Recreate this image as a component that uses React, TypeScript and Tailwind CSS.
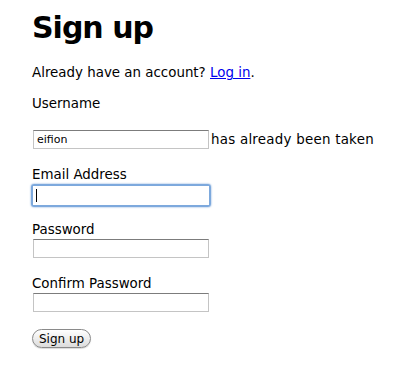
import { useState } from "react";

const font = { fontFamily: '"DejaVu Sans", Verdana, sans-serif' };

function TextInput({ value, focused, type = "text" }: { value?: string; focused?: boolean; type?: string }) {
  const base =
    "block shrink-0 w-[176px] h-[19px] bg-white px-[3px] text-[11px] text-black outline-none border border-[#c4c4c4] border-t-[#7c7c7c]";
  if (focused) {
    return (
      <div className="w-[180px] h-[23px] -ml-[2px] rounded-[3px] border-[2px] border-[#7da9dd] shadow-[0_0_2px_#6b9ad3]">
        <div className="h-full w-full bg-white flex items-center pl-[3px]">
          <span className="block w-px h-[13px] bg-black" />
        </div>
      </div>
    );
  }
  return <input type={type} defaultValue={value} readOnly className={base} style={font} />;
}

export default function App() {
  const [name] = useState("eifion");
  return (
    <div className="min-h-[378px] w-[398px] bg-white text-black text-[13.4px] leading-[17px] px-[32px] pt-[9px]" style={font}>
      <h1 className="text-[30px] leading-[37px] font-bold tracking-[-1px]">Sign up</h1>
      <p className="mt-[18px]">
        Already have an account?{" "}
        <a href="#" className="text-[#0000ee] underline">
          Log in
        </a>
        .
      </p>

      <div className="mt-[14px]">Username</div>
      <div className="mt-[18px] flex items-center pl-px whitespace-nowrap">
        <TextInput value={name} />
        <span className="ml-[2px] shrink-0 tracking-[0.25px]">has already been taken</span>
      </div>

      <div className="mt-[17px]">Email Address</div>
      <div className="mt-[1px] pl-px">
        <TextInput focused />
      </div>

      <div className="mt-[14px]">Password</div>
      <div className="mt-[1px] pl-px">
        <TextInput type="password" />
      </div>

      <div className="mt-[17px]">Confirm Password</div>
      <div className="mt-[1px] pl-px">
        <TextInput type="password" />
      </div>

      <button
        className="mt-[17px] h-[19px] px-[6px] rounded-full border border-[#8a8a8a] bg-gradient-to-b from-white to-[#dcdcdc] text-[12px] leading-[16px] text-black shadow-[0_1px_1px_rgba(0,0,0,0.15)]"
        style={font}
      >
        Sign up
      </button>
    </div>
  );
}
